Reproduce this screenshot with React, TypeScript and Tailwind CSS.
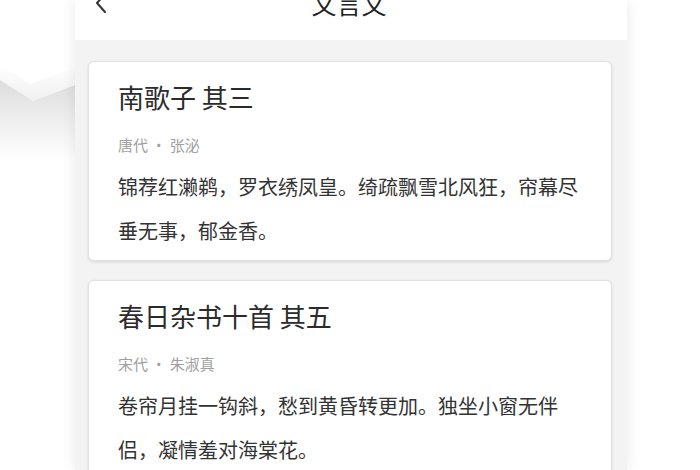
import React from 'react';

const poems = [
  {
    title: '南歌子 其三',
    meta: '唐代 · 张泌',
    body: '锦荐红濑鹈，罗衣绣凤皇。绮疏飘雪北风狂，帘幕尽垂无事，郁金香。',
  },
  {
    title: '春日杂书十首 其五',
    meta: '宋代 · 朱淑真',
    body: '卷帘月挂一钩斜，愁到黄昏转更加。独坐小窗无伴侣，凝情羞对海棠花。',
  },
];

function Backdrop() {
  return (
    <svg width="75" height="470" viewBox="0 0 75 470" className="block">
      <defs>
        <linearGradient id="hill" x1="0" y1="0" x2="0" y2="1">
          <stop offset="0" stopColor="#dddddd" />
          <stop offset="0.4" stopColor="#ebebeb" />
          <stop offset="1" stopColor="#ffffff" />
        </linearGradient>
        <linearGradient id="ridge" x1="0" y1="0" x2="0" y2="1">
          <stop offset="0" stopColor="#ffffff" />
          <stop offset="1" stopColor="#f0f0f0" />
        </linearGradient>
      </defs>
      <path d="M0 64 L30 84 L75 68 L75 85 L33 101 L0 80 Z" fill="url(#ridge)" />
      <path d="M0 80 L33 101 L75 85 L75 160 L0 160 Z" fill="url(#hill)" />
    </svg>
  );
}

export default function App() {
  return (
    <div
      className="w-[700px] h-[470px] overflow-hidden bg-white flex"
      style={{ fontFamily: '"Noto Sans CJK SC", "Noto Sans", sans-serif' }}
    >
      <div className="w-[75px] shrink-0">
        <Backdrop />
      </div>

      <div className="w-[552px] shrink-0 h-full flex flex-col bg-[#f3f3f3] shadow-[0_0_14px_rgba(0,0,0,0.09)] z-10">
        <div className="h-[40px] shrink-0 bg-white overflow-hidden">
          <div className="-mt-[25px] h-[56px] flex items-center px-[18px] relative">
            <svg width="16" height="24" viewBox="0 0 16 24" className="text-[#333]">
              <path d="M12 3 L4 12 L12 21" fill="none" stroke="currentColor" strokeWidth="2" strokeLinecap="round" strokeLinejoin="round" />
            </svg>
            <span className="absolute left-0 right-0 text-center text-[25px] leading-[56px] text-[#222] pr-[4px]">
              文言文
            </span>
          </div>
        </div>

        <div className="flex flex-col gap-[19px] pl-[13px] pr-[15px] pt-[21px]">
          {poems.map((p) => (
            <div
              key={p.title}
              className="shrink-0 bg-white rounded-[6px] border border-[#e2e2e2] shadow-[0_1px_3px_rgba(0,0,0,0.12)] px-[29px] pt-[17px] pb-[7px]"
            >
              <h2 className="text-[26px] leading-[36px] text-[#2b2b2b]">{p.title}</h2>
              <p className="mt-[18px] text-[15px] leading-[24px] text-[#a0a0a0]">{p.meta}</p>
              <p className="mt-[8px] text-[20px] leading-[44px] text-[#333]">{p.body}</p>
            </div>
          ))}
        </div>
      </div>

      <div className="flex-1" />
    </div>
  );
}
